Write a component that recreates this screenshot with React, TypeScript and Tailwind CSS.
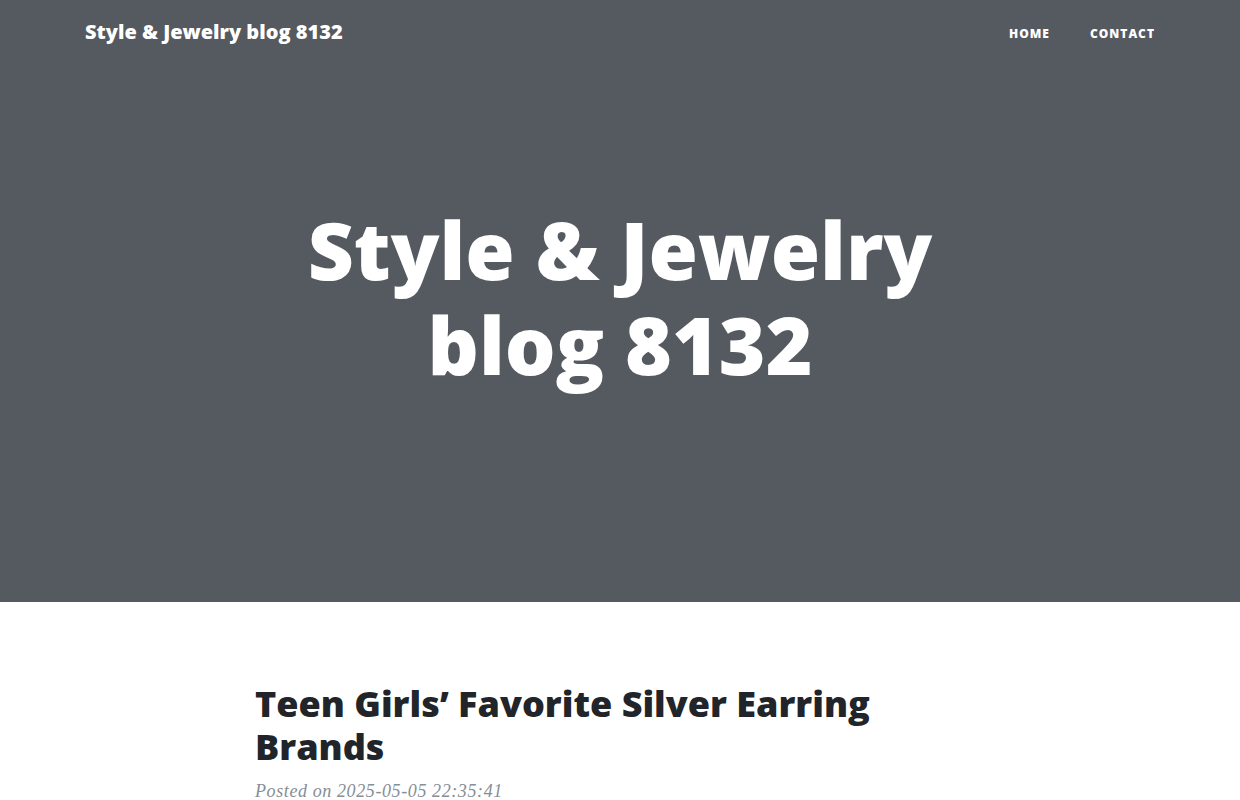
export default function App() {
  return (
    <div className="min-h-[800px] bg-white font-['Open_Sans',sans-serif]">
      <header className="bg-[#555960] pb-[211px]">
        <nav className="flex h-16 items-center justify-between pl-[85px] pr-[65px]">
          <a className="text-[20px] font-extrabold text-white" href="#">
            Style &amp; Jewelry blog 8132
          </a>
          <ul className="flex">
            <li>
              <a className="px-5 text-[12px] font-extrabold uppercase tracking-[1px] text-white" href="#">
                Home
              </a>
            </li>
            <li>
              <a className="px-5 text-[12px] font-extrabold uppercase tracking-[1px] text-white" href="#">
                Contact
              </a>
            </li>
          </ul>
        </nav>
        <div className="mx-auto mt-[137px] w-[730px] text-center">
          <h1 className="text-[80px] font-extrabold leading-[95px] text-white">
            Style &amp; Jewelry blog 8132
          </h1>
        </div>
      </header>
      <main className="mx-auto w-[730px] pt-[80px]">
        <article>
          <h2 className="mb-[10px] text-[36px] font-extrabold leading-[43px] text-[#212529]">
            Teen Girls’ Favorite Silver Earring Brands
          </h2>
          <p className="font-['Liberation_Serif',serif] text-[18px] italic leading-[27px] tracking-[0.6px] text-[#868e96]">
            Posted on 2025-05-05 22:35:41
          </p>
        </article>
      </main>
    </div>
  );
}
